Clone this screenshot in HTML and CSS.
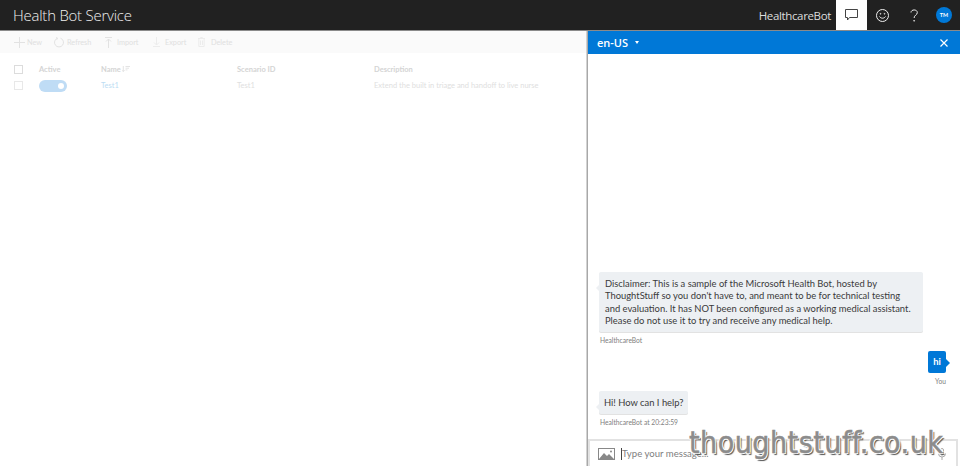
FILE: index.html
```html
<!DOCTYPE html>
<html lang="en">
<head>
<meta charset="utf-8">
<title>Health Bot Service</title>
<link rel="stylesheet" href="styles.css">
</head>
<body>
<header class="topbar">
  <div class="brand">Health Bot Service</div>
  <div class="top-right">
    <span class="account">HealthcareBot</span>
    <button class="top-btn active" aria-label="Chat">
      <svg width="13" height="12" viewBox="0 0 13 12"><path d="M.5.5h12v8H4.500L2.500 11V8.500H.5z" fill="none" stroke="#444" stroke-width="1"/></svg>
    </button>
    <button class="top-btn" aria-label="Feedback">
      <svg width="13" height="13" viewBox="0 0 13 13" fill="none" stroke="#eee" stroke-width="1"><circle cx="6.500" cy="6.500" r="6"/><path d="M3.500 7.500c1.500 2.300 4.500 2.300 6 0"/><circle cx="4.500" cy="4.800" r=".4"/><circle cx="8.500" cy="4.800" r=".4"/></svg>
    </button>
    <button class="top-btn" aria-label="Help">
      <svg width="8" height="13" viewBox="0 0 8 13" fill="none" stroke="#eee" stroke-width="1"><path d="M1 3.500C1 .1 7.300.1 7.300 3.500c0 2.700-3.200 2.500-3.200 5.500"/><circle cx="4.100" cy="11.800" r=".4" fill="#eee"/></svg>
    </button>
    <div class="avatar">TM</div>
  </div>
</header>
<main class="main">
  <section class="list">
    <div class="toolbar">
      <span class="tool t-new"><svg width="11" height="11" viewBox="0 0 11 11"><path d="M5.500 0v11M0 5.500h11" stroke="#e2e2e2" fill="none"/></svg>New</span>
      <span class="tool t-refresh"><svg width="10" height="11" viewBox="0 0 10 11"><path d="M3.500 1.200a4.500 4.500 0 1 0 3 0M2 .5l1.500.7-.7 1.500" stroke="#e2e2e2" fill="none"/></svg>Refresh</span>
      <span class="tool t-import"><svg width="7" height="11" viewBox="0 0 7 11"><path d="M0 .5h7M3.500 11V2M1 4.500l2.500-2.500L6 4.500" stroke="#e2e2e2" fill="none"/></svg>Import</span>
      <span class="tool t-export"><svg width="7" height="10" viewBox="0 0 7 10"><path d="M0 9.500h7M3.500 0v8M1 5.500L3.500 8 6 5.500" stroke="#ececec" fill="none"/></svg>Export</span>
      <span class="tool t-delete"><svg width="7" height="10" viewBox="0 0 7 10"><path d="M0 1.500h7M.8 1.500v8h5.400v-8M2.500 1.500V.5h2v1M2.500 3.500v4.500M4.500 3.500v4.500" stroke="#ececec" fill="none"/></svg>Delete</span>
    </div>
    <div class="row head">
      <span class="cell-check"><i class="check"></i></span>
      <span class="cell-active">Active</span>
      <span class="cell-name">Name <svg width="8" height="6" viewBox="0 0 8 6"><path d="M1.300 0v5.500M0 4.200l1.300 1.300 1.300-1.300M3.500.5h4.500M3.500 2.200h3.500M3.500 3.900h2" stroke="#d8d8d8" fill="none" stroke-width=".7"/></svg></span>
      <span class="cell-id">Scenario ID</span>
      <span class="cell-desc">Description</span>
    </div>
    <div class="row body-row">
      <span class="cell-check"><i class="check faint"></i></span>
      <span class="cell-active"><i class="toggle"><b></b></i></span>
      <span class="cell-name link">Test1</span>
      <span class="cell-id">Test1</span>
      <span class="cell-desc">Extend the built in triage and handoff to live nurse</span>
    </div>
  </section>
  <aside class="chat">
    <div class="chat-head">
      <span class="lang">en-US</span><span class="caret"></span>
      <svg class="close" width="8" height="8" viewBox="0 0 8 8"><path d="M.5.5l7 7M7.500.5l-7 7" stroke="#fff" stroke-width="1.200" fill="none"/></svg>
    </div>
    <div class="messages">
      <div class="bubble bot">Disclaimer: This is a sample of the Microsoft Health Bot, hosted by<br>ThoughtStuff so you don't have to, and meant to be for technical testing<br>and evaluation. It has NOT been configured as a working medical assistant.<br>Please do not use it to try and receive any medical help.</div>
      <div class="meta">HealthcareBot</div>
      <div class="bubble user">hi</div>
      <div class="meta right">You</div>
      <div class="bubble bot short">Hi! How can I help?</div>
      <div class="meta">HealthcareBot at 20:23:59</div>
    </div>
    <div class="composer">
      <svg width="17" height="12" viewBox="0 0 17 12"><rect x=".5" y=".5" width="16" height="11" fill="none" stroke="#888"/><path d="M1 11l5-6 3 3 2-2 5 5z" fill="#888"/><circle cx="13" cy="3.500" r="1" fill="#888"/></svg>
      <span class="caret-line"></span><span class="placeholder">Type your message...</span>
      <svg class="mic" width="8" height="12" viewBox="0 0 8 12"><path d="M4 .5a1.500 1.500 0 0 1 1.500 1.500v3.500a1.500 1.500 0 0 1-3 0V2A1.500 1.500 0 0 1 4 .5zM.5 5.500a3.500 3.500 0 0 0 7 0M4 9v3" stroke="#aaa" fill="none"/></svg>
    </div>
  </aside>
</main>
<div class="watermark">thoughtstuff.co.uk</div>
</body>
</html>
```
FILE: styles.css
```css
* { box-sizing: border-box; }
html, body { margin: 0; height: 466px; overflow: hidden; background: #fff; }
body { font-family: Lato, "Open Sans", "Liberation Sans", sans-serif; position: relative; }
.topbar { height: 31px; background: #212121; border-bottom: 1px solid #8a8a8a; display: flex; justify-content: space-between; color: #f0f0f0; }
.brand { font-family: "Open Sans", sans-serif; font-size: 14.900px; font-weight: 300; line-height: 30px; padding-left: 13px; letter-spacing: -.2px; }
.top-right { display: flex; align-items: center; height: 30px; }
.account { font-family: "Open Sans", sans-serif; font-size: 11.500px; font-weight: 400; color: #ddd; margin-right: 5px; letter-spacing: -.35px; }
.top-btn { width: 31px; height: 30px; padding: 0; border: 0; background: none; display: flex; align-items: center; justify-content: center; }
.top-btn.active { background: #fff; }
.avatar { width: 16px; height: 16px; border-radius: 50%; background: #0078d7; color: #fff; font-size: 5.500px; line-height: 16px; text-align: center; margin: 0 8px 0 7px; font-weight: 700; }
.main { display: flex; height: 435px; }
.list { width: 588px; flex: none; }
.toolbar { height: 22px; background: #fafafa; display: flex; align-items: center; padding-left: 14px; }
.tool { display: flex; align-items: center; font-size: 7.300px; color: #e0e0e0; }
.t-new { gap: 2px; width: 40px; }
.t-refresh { gap: 3px; width: 51px; }
.t-import { gap: 5px; width: 48px; }
.t-export { gap: 5px; width: 45px; }
.t-delete { gap: 6px; }
.row { display: flex; align-items: center; font-size: 7.500px; }
.head { height: 16px; margin-top: 8px; color: #d4d4d4; font-weight: 700; }
.body-row { height: 17px; color: #e0e0e0; }
.cell-check { width: 39px; padding-left: 14px; display: flex; }
.cell-active { width: 62px; display: flex; }
.cell-name { width: 136px; display: flex; align-items: center; gap: 1px; }
.cell-id { width: 137px; }
.cell-desc { flex: 1; }
.link { color: #bcdcf3; }
.check { width: 9px; height: 9px; border: 1px solid #dcdcdc; display: block; }
.check.faint { border-color: #e8e8e8; }
.toggle { width: 28px; height: 12px; border-radius: 6px; background: #bfdcf5; position: relative; display: block; }
.toggle b { position: absolute; right: 3px; top: 3px; width: 6px; height: 6px; border-radius: 50%; background: #fff; }
.chat { width: 372px; flex: none; box-shadow: -1.500px 0 0 #a8a8a8; display: flex; flex-direction: column; height: 435px; }
.chat-head { height: 23px; background: #0078d7; color: #fff; display: flex; align-items: center; padding: 0 12px 0 9px; flex: none; }
.lang { font-family: "Open Sans", sans-serif; font-size: 11px; font-weight: 600; }
.caret { width: 0; height: 0; border-left: 2px solid transparent; border-right: 2px solid transparent; border-top: 3px solid #fff; margin-left: 7px; }
.close { margin-left: auto; }
.messages { flex: 1; display: flex; flex-direction: column; justify-content: flex-end; padding: 0 14px 12px 11px; }
.bubble { font-size: 9.400px; line-height: 12.600px; color: #3a3a3a; background: #edf0f3; padding: 6px 5px 4px 6px; position: relative; border-radius: 2px; }
.bot { width: 324px; box-shadow: 0 1px 0 #e2e2e2; }
.bot::before { content: ""; position: absolute; left: -3px; top: 13px; border: 3px solid transparent; border-left: 0; border-right-color: #edf0f3; }
.short { width: auto; align-self: flex-start; margin-top: 5px; padding: 6px 5px 4px; height: 23px; white-space: nowrap; }
.user { background: #0078d7; color: #fff; align-self: flex-end; width: 18px; height: 22px; line-height: 22px; padding: 0; text-align: center; font-weight: 700; margin-top: 6px; }
.user::after { content: ""; position: absolute; right: -4px; top: 8px; border: 4px solid transparent; border-right: 0; border-left-color: #0078d7; }
.meta { font-size: 6.700px; color: #808080; margin-top: 3px; line-height: 10px; padding-left: 1px; }
.right { align-self: flex-end; }
.composer { height: 27px; flex: none; border: 2px solid #e2e2e2; border-bottom: 0; display: flex; align-items: center; padding-left: 8px; margin: 0 2px 0 0; }
.caret-line { width: 1px; height: 12px; background: #444; margin-left: 6px; }
.placeholder { font-size: 9.600px; color: #808080; }
.mic { margin-left: auto; margin-right: 10px; }
.watermark { position: absolute; left: 689px; top: 421px; font-family: "DejaVu Sans Condensed", "DejaVu Sans", sans-serif; font-stretch: condensed; font-size: 30px; line-height: 44px; letter-spacing: .5px; color: #8c8c8c; -webkit-text-stroke: .5px #8c8c8c; white-space: nowrap; text-shadow: 1px 1px 0 #fff, -1px -1px 0 #fff, 1px -1px 0 #fff, -1px 1px 0 #fff, 2px 2px 1px #555; }
```
